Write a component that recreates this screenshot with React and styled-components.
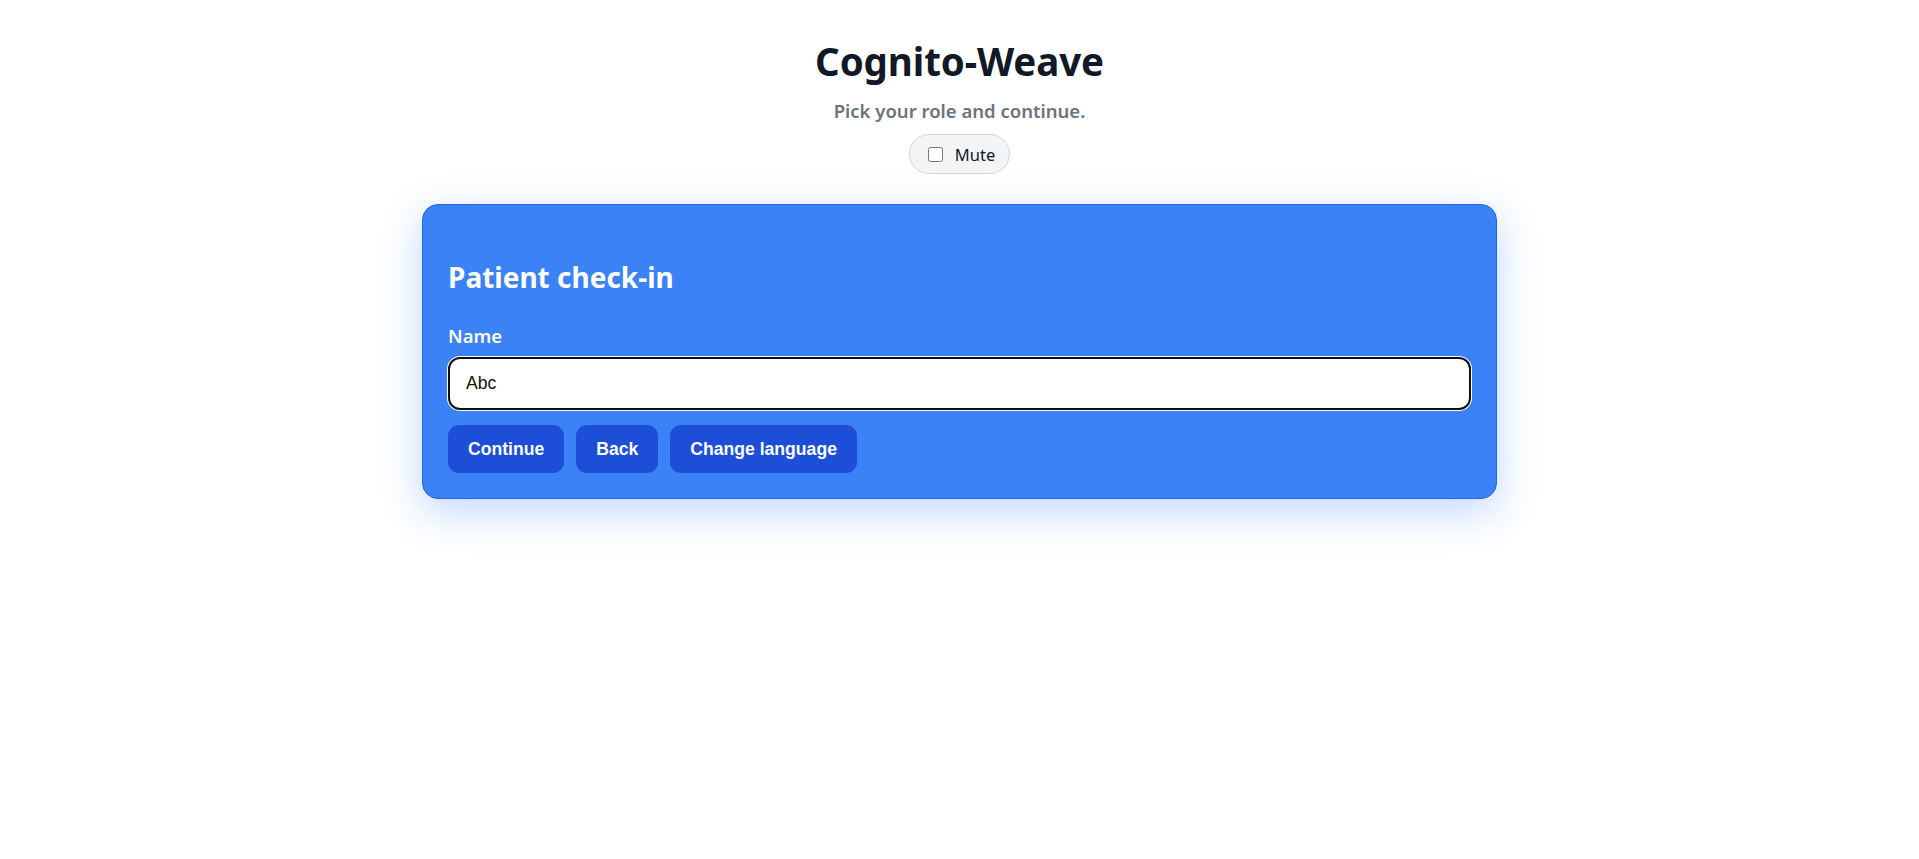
import React from "react";
import styled, { createGlobalStyle } from "styled-components";

const GlobalStyle = createGlobalStyle`
  html, body {
    margin: 0;
    padding: 0;
    background: #ffffff;
  }
  body {
    font-family: "Noto Sans", "Open Sans", sans-serif;
    color: #111827;
  }
  * { box-sizing: border-box; }
`;

const Page = styled.main`
  min-height: 100vh;
  display: flex;
  flex-direction: column;
  align-items: center;
  padding: 39px 0 80px;
`;

const Header = styled.header`
  display: flex;
  flex-direction: column;
  align-items: center;
`;

const Title = styled.h1`
  margin: 0;
  font-size: 38.5px;
  line-height: 45px;
  font-weight: 700;
  color: #111827;
  letter-spacing: -0.1px;
`;

const Subtitle = styled.p`
  margin: 16px 0 0;
  font-size: 18.5px;
  line-height: 21px;
  font-weight: 600;
  color: #6b7280;
`;

const MutePill = styled.label`
  margin-top: 13px;
  height: 40px;
  display: inline-flex;
  align-items: center;
  gap: 12px;
  padding: 0 14px 0 18px;
  background: #f3f4f6;
  border: 1px solid #d1d5db;
  border-radius: 999px;
  font-size: 16.5px;
  color: #111827;
  cursor: pointer;
`;

const Checkbox = styled.input`
  margin: 0;
  width: 15px;
  height: 15px;
`;

const Card = styled.section`
  margin-top: 30px;
  width: 1075px;
  background: #3b82f6;
  border: 1px solid #2563eb;
  border-radius: 16px;
  padding: 55px 25px 25px;
  box-shadow: 0 12px 40px rgba(59, 130, 246, 0.32);
  display: flex;
  flex-direction: column;
`;

const CardTitle = styled.h2`
  margin: 0;
  font-size: 28px;
  line-height: 35px;
  font-weight: 700;
  color: #ffffff;
`;

const Label = styled.label`
  margin-top: 30px;
  font-size: 18.5px;
  line-height: 22px;
  font-weight: 600;
  color: #ffffff;
`;

const TextInput = styled.input`
  margin-top: 10px;
  height: 53px;
  width: 100%;
  padding: 0 16px;
  border: 2px solid #111111;
  border-radius: 12px;
  box-shadow: 0 0 0 1px #ffffff;
  outline: none;
  background: #ffffff;
  font-family: "Liberation Sans", Arial, sans-serif;
  font-size: 17.6px;
  color: #111111;
  caret-color: #111111;
`;

const Actions = styled.div`
  margin-top: 15px;
  display: flex;
  gap: 12px;
`;

const Button = styled.button`
  height: 48px;
  padding: 0 20px;
  border: none;
  border-radius: 11px;
  background: #1d4ed8;
  color: #ffffff;
  font-family: "Liberation Sans", Arial, sans-serif;
  font-size: 17.6px;
  font-weight: 700;
  cursor: pointer;
`;

export default function App() {
  return (
    <>
      <GlobalStyle />
      <Page>
        <Header>
          <Title>Cognito-Weave</Title>
          <Subtitle>Pick your role and continue.</Subtitle>
          <MutePill>
            <Checkbox type="checkbox" />
            Mute
          </MutePill>
        </Header>
        <Card>
          <CardTitle>Patient check-in</CardTitle>
          <Label htmlFor="name">Name</Label>
          <TextInput id="name" defaultValue="Abc" autoFocus />
          <Actions>
            <Button>Continue</Button>
            <Button>Back</Button>
            <Button>Change language</Button>
          </Actions>
        </Card>
      </Page>
    </>
  );
}
